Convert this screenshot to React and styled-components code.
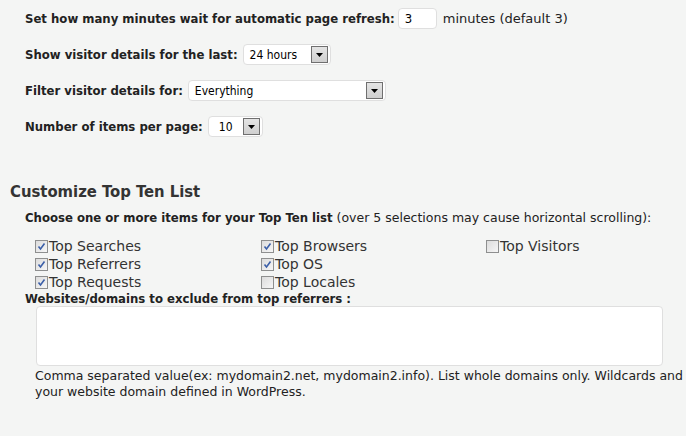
import React from "react"
import styled, { createGlobalStyle } from "styled-components"

const GlobalStyle = createGlobalStyle`
    body {
        margin: 0;
        background: #f4f5f4;
        font-family: "DejaVu Sans", sans-serif;
        font-size: 12.5px;
        color: #222;
    }
`

const Page = styled.div`
    width: 686px;
    height: 436px;
    overflow: hidden;
    padding: 8px 0 0 0;
    box-sizing: border-box;
`

const Settings = styled.div`
    padding-left: 25px;
    display: flex;
    flex-direction: column;
    gap: 15px;
`

const Row = styled.div`
    display: flex;
    align-items: center;
    height: 21px;
    font-size: 13px;
`

// Bold labels are narrower (Tahoma-like) than the body text
const Label = styled.span`
    font-weight: bold;
    font-family: "DejaVu Sans Condensed", "DejaVu Sans", sans-serif;
    font-stretch: condensed;
    font-size: 13px;
    margin-right: ${(p) => p.gap ?? 5}px;
`

const TextInput = styled.div`
    width: 39px;
    height: 21px;
    box-sizing: border-box;
    background: #fff;
    border: 1px solid #dfdfdf;
    border-radius: 4px;
    padding: 2px 6px;
    color: #000;
    margin-right: 6px;
    font-family: "DejaVu Sans Condensed", "DejaVu Sans", sans-serif;
    font-stretch: condensed;
`

const Select = styled.div`
    width: ${(p) => p.width}px;
    height: 21px;
    box-sizing: border-box;
    background: #fff;
    border: 1px solid #dfdfdf;
    border-radius: 4px;
    display: flex;
    align-items: center;
    justify-content: space-between;
    padding: 0 2px 0 ${(p) => p.indent || 6}px;
    color: #000;
    font-family: "DejaVu Sans Condensed", "DejaVu Sans", sans-serif;
    font-stretch: condensed;
    font-size: 12px;
`

const ArrowButton = styled.span`
    width: 17px;
    height: 17px;
    box-sizing: border-box;
    border: 1px solid #6f6f6f;
    background: linear-gradient(#e4e4e4, #cfcfcf);
    display: flex;
    align-items: center;
    justify-content: center;
`

const Heading = styled.h3`
    margin: 45px 0 0 10px;
    font-family: "DejaVu Sans Condensed", "DejaVu Sans", sans-serif;
    font-stretch: condensed;
    font-size: 16.5px;
    font-weight: bold;
    color: #333;
`

const Section = styled.div`
    padding-left: 25px;
`

const Intro = styled.p`
    margin: 9px 0 12px 0;
`

const CheckGrid = styled.div`
    display: grid;
    grid-template-columns: 226px 225px 180px;
    padding-left: 10px;
`

const CheckItem = styled.label`
    display: flex;
    align-items: center;
    height: 18px;
    font-size: 14px;
    color: #333;
`

const Box = styled.span`
    width: 13px;
    height: 13px;
    box-sizing: border-box;
    border: 1px solid #8e8f8f;
    background: linear-gradient(135deg, #dcdcdc, #f6f6f6);
    display: inline-flex;
    align-items: center;
    justify-content: center;
    margin-right: 1px;
`

const TextArea = styled.div`
    margin: 0 0 0 11px;
    width: 627px;
    height: 60px;
    box-sizing: border-box;
    background: #fff;
    border: 1px solid #dfdfdf;
    border-radius: 4px;
`

const Help = styled.p`
    margin: 2px 0 0 10px;
    line-height: 16px;
    white-space: nowrap;
`

const Arrow = () => (
    <ArrowButton>
        <svg width="7" height="4" viewBox="0 0 7 4">
            <path d="M0 0h7L3.5 4z" fill="#000" />
        </svg>
    </ArrowButton>
)

const Checkbox = ({ checked, label }) => (
    <CheckItem>
        <Box>
            {checked && (
                <svg width="9" height="9" viewBox="0 0 9 9">
                    <path d="M1.5 4.5l2 2.5L7.5 1.5" stroke="#3b5fa8" strokeWidth="1.6" fill="none" />
                </svg>
            )}
        </Box>
        {label}
    </CheckItem>
)

const items = [
    { label: "Top Searches", checked: true },
    { label: "Top Browsers", checked: true },
    { label: "Top Visitors", checked: false },
    { label: "Top Referrers", checked: true },
    { label: "Top OS", checked: true },
    null,
    { label: "Top Requests", checked: true },
    { label: "Top Locales", checked: false },
]

const App = () => {
    return (
        <>
            <GlobalStyle />
            <Page>
                <Settings>
                    <Row>
                        <Label gap={3}>Set how many minutes wait for automatic page refresh:</Label>
                        <TextInput>3</TextInput>
                        minutes (default 3)
                    </Row>
                    <Row>
                        <Label>Show visitor details for the last:</Label>
                        <Select width={88}>24 hours<Arrow /></Select>
                    </Row>
                    <Row>
                        <Label>Filter visitor details for:</Label>
                        <Select width={198}>Everything<Arrow /></Select>
                    </Row>
                    <Row>
                        <Label>Number of items per page:</Label>
                        <Select width={55} indent={10}>10<Arrow /></Select>
                    </Row>
                </Settings>

                <Heading>Customize Top Ten List</Heading>
                <Section>
                    <Intro>
                        <Label gap={0}>Choose one or more items for your Top Ten list</Label> (over 5 selections may cause horizontal scrolling):
                    </Intro>
                    <CheckGrid>
                        {items.map((item, i) =>
                            item ? <Checkbox key={i} {...item} /> : <span key={i} />
                        )}
                    </CheckGrid>
                    <Label as="div">Websites/domains to exclude from top referrers :</Label>
                    <TextArea />
                    <Help>
                        Comma separated value(ex: mydomain2.net, mydomain2.info). List whole domains only. Wildcards and
                        <br />
                        your website domain defined in WordPress.
                    </Help>
                </Section>
            </Page>
        </>
    )
}

export default App
